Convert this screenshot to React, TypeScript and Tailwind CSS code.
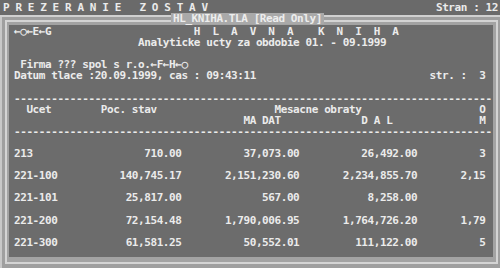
import React from "react";

// one DOS text row: cells placed at 80-column positions (grid starts at col 2)
type Cell = [number, string, "l" | "r"?];

const row = (cells: Cell[]) => {
    const buf = Array(78).fill(" ");
    for (const [col, text, align] of cells) {
        const start = align === "r" ? col - text.length + 1 : col;
        for (let i = 0; i < text.length; i++) buf[start - 2 + i] = text[i];
    }
    return buf.join("").replace(/\s+$/, "");
};

const dashes = row([[2, "-".repeat(77)]]);

const data: [string, string, string, string, string][] = [
    ["213", "710.00", "37,073.00", "26,492.00", "3"],
    ["221-100", "140,745.17", "2,151,230.60", "2,234,855.70", "2,15"],
    ["221-101", "25,817.00", "567.00", "8,258.00", ""],
    ["221-200", "72,154.48", "1,790,006.95", "1,764,726.20", "1,79"],
    ["221-300", "61,581.25", "50,552.01", "111,122.00", "5"],
];

const lines: string[] = [
    row([[2, "←○←E←G"], [31, "H  L  A  V  N  A    K  N  I  H  A"]]),
    row([[22, "Analyticke ucty za obdobie 01. - 09.1999"]]),
    "",
    row([[3, "Firma ??? spol s r.o.←F←H←○"]]),
    row([[2, "Datum tlace :20.09.1999, cas : 09:43:11"], [69, "str. :  3"]]),
    "",
    dashes,
    row([[4, "Ucet"], [16, "Poc. stav"], [44, "Mesacne obraty"], [77, "O"]]),
    row([[39, "MA DAT"], [58, "D A L"], [77, "M"]]),
    dashes,
    "",
];

data.forEach(([ucet, poc, ma, dal, om], i) => {
    if (i > 0) lines.push("");
    lines.push(
        row([
            [2, ucet],
            [28, poc, "r"],
            [47, ma, "r"],
            [66, dal, "r"],
            [77, om, "r"],
        ])
    );
});

export default function App() {
    return (
        <div className="relative w-[500px] h-[268px] overflow-hidden flex flex-col bg-[#a6a6a6] font-['DejaVu_Sans_Mono','Liberation_Mono',monospace] text-[11px] font-bold tracking-[-0.42px] text-[#ebebeb]">
            {/* ── Top status bar ─────────────────────────────── */}
            <div className="h-[15px] shrink-0 flex justify-between bg-[#6a6a6a] pl-[3px] pr-[2px] leading-[15px] whitespace-pre">
                <span>P R E Z E R A N I E   Z O S T A V</span>
                <span>Stran : 12</span>
            </div>
            <div className="h-[2px] shrink-0 bg-[#d0d0d0]" />

            {/* ── Window frame ───────────────────────────────── */}
            <div className="flex-1 flex flex-col border-l-2 border-[#c8c8c8] pl-[3px] pr-[2px] pt-[3px] pb-[4px] bg-[#9f9f9f]">
                <div className="flex-1 flex flex-col border-2 border-[#d4d4d4] bg-[#a3a3a3] pl-[2px] pr-[3px] pt-[3px] pb-[5px]">
                    <div className="flex-1 overflow-hidden bg-[#6c6c6c] pl-[5px] pt-[1px] leading-[11.1px] whitespace-pre">
                        {lines.map((l, i) => (
                            <div key={i} className="h-[11.1px]">
                                {l}
                            </div>
                        ))}
                    </div>
                </div>
            </div>

            {/* Title sits over the top border */}
            <div className="absolute left-[171px] top-[13px] px-[2px] bg-[#a9a9a9] leading-[11px] whitespace-pre text-[#ededed]">
                HL_KNIHA.TLA [Read Only]
            </div>
        </div>
    );
}
